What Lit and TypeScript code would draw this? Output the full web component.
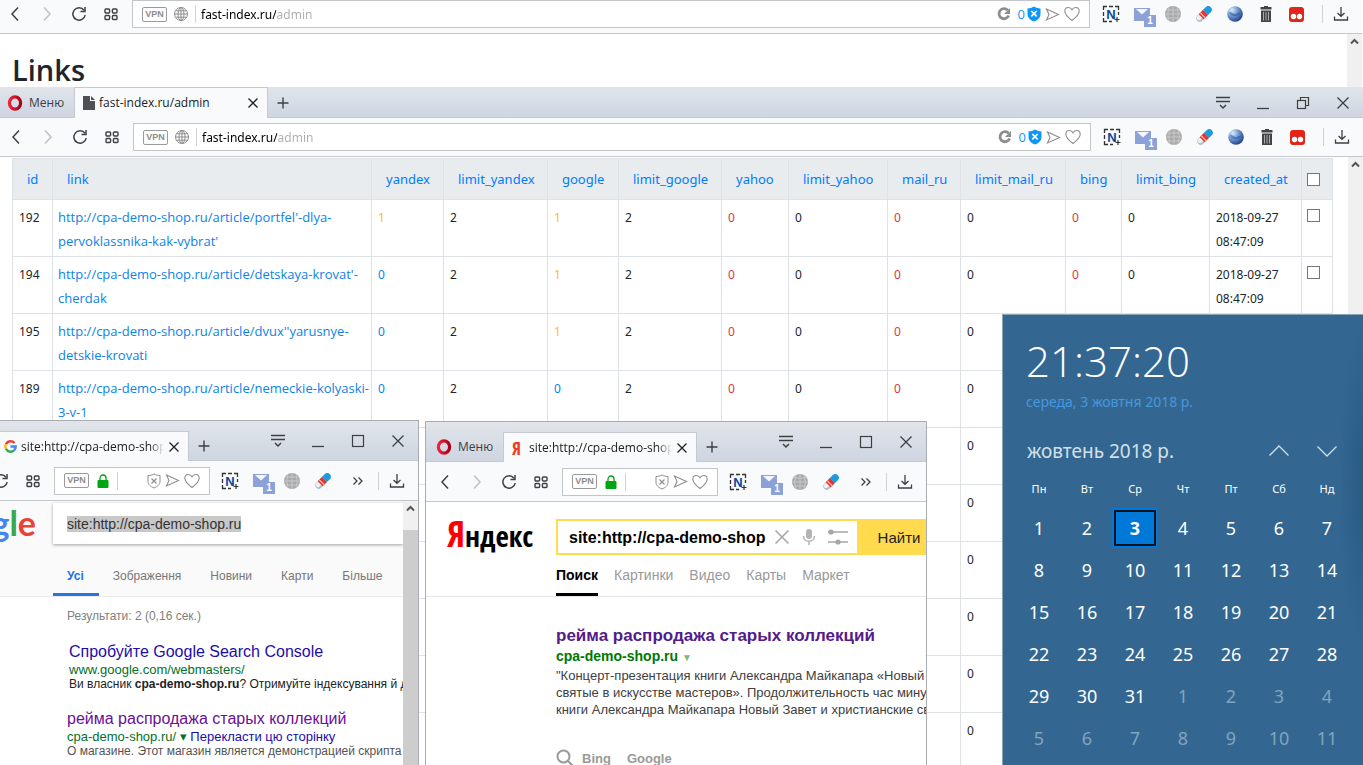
import { LitElement, html, css, svg, nothing } from "lit";
import { customElement, property } from "lit/decorators.js";
import { classMap } from "lit/directives/class-map.js";

/* ---------- icons ---------- */

const line = (size: number, body: unknown, width = 1.5) => html`
  <svg width=${size} height=${size} viewBox="0 0 ${size} ${size}" fill="none" stroke="currentColor"
    stroke-width=${width} aria-hidden="true">${body}</svg>`;

const icons = {
  back: line(16, svg`<path d="M11 1.500 5 8l6 6.500"/>`),
  forward: line(16, svg`<path d="M5 1.500 11 8l-6 6.500"/>`),
  reload: line(16, svg`<path d="M13 4.200A6.200 6.200 0 1 0 14.200 9"/><path d="M14 1v4.500H9.500"/>`),
  tiles: line(16, svg`<rect x="2" y="3" width="4.600" height="4" rx="1"/><rect x="9.400" y="3" width="4.600" height="4" rx="1"/>
    <rect x="2" y="9.500" width="4.600" height="4" rx="1"/><rect x="9.400" y="9.500" width="4.600" height="4" rx="1"/>`, 1.4),
  globe: line(16, svg`<circle cx="8" cy="8" r="6.500"/><ellipse cx="8" cy="8" rx="3" ry="6.500"/>
    <path d="M8 1.500v13M1.500 8h13M2.500 4.800h11M2.500 11.200h11"/>`, 1),
  reloadBold: line(16, svg`<path d="M11.700 4.300A5 5 0 1 0 12.700 9.500" stroke-width="2.800"/><path d="M14 2v6H8z" fill="currentColor" stroke="none"/>`),
  shield: html`<svg width="14" height="16" viewBox="0 0 14 16" aria-hidden="true">
    <path d="M.5 2.500C3 2.500 5 1.800 7 .5c2 1.300 4 2 6.500 2v5.500c0 3.500-2.500 6-6.500 7.500C3 14 .5 11.500.5 8z" fill="#0d97f7"/>
    <path d="M4.300 5l5.400 5.400M9.700 5l-5.400 5.400" stroke="#fff" stroke-width="1.700"/></svg>`,
  shieldLine: html`<svg width="14" height="16" viewBox="0 0 14 16" fill="none" stroke="#8d8d8d" aria-hidden="true">
    <path d="M1 2.500c2.500 0 4-.5 6-1.500 2 1 3.500 1.500 6 1.500v6c0 3-2.500 5-6 6.500-3.500-1.500-6-3.500-6-6.500z"/><path d="M4.500 5.500l5 5M9.500 5.500l-5 5" stroke-width="1.200"/></svg>`,
  send: line(15, svg`<path d="M1.500 2l12 5.500-12 5.500 2.500-5.500z"/>`, 1.1),
  heart: line(16, svg`<path d="M8 14.500C4 11.500.8 8.500.8 5.300.8 3 2.400 1.500 4.400 1.500 6 1.500 7.300 2.300 8 3.800c.7-1.500 2-2.300 3.600-2.300 2 0 3.600 1.500 3.600 3.800 0 3.200-3.200 6.200-7.200 9.200z"/>`, 1.1),
  lock: html`<svg width="12" height="14" viewBox="0 0 12 14" aria-hidden="true"><rect x=".5" y="6" width="11" height="8" rx="1" fill="#00a513"/>
    <path d="M3 7V4a3 3 0 0 1 6 0v3" fill="none" stroke="#00a513" stroke-width="1.300"/></svg>`,
  snap: html`<svg width="18" height="18" viewBox="0 0 18 18" aria-hidden="true">
    <path d="M1.500 5V1.500H5M7 1.500h4M13 1.500h3.500V5M1.500 7v4M1.500 13v3.500H5M7 16.500h3M16.500 7v3" fill="none" stroke="#333" stroke-width="1.300"/>
    <path d="M15 12v5M12.500 14.500h5" stroke="#333" stroke-width="1.200"/>
    <text x="9" y="13.500" text-anchor="middle" font-family="Liberation Sans" font-weight="700" font-size="13" fill="#0b47a1">N</text></svg>`,
  mail: html`<svg width="16" height="13" viewBox="0 0 16 13" aria-hidden="true"><rect width="16" height="13" fill="#8ba1d8"/>
    <path d="M2 1h12L8 6.500z" fill="#f4f6fc"/></svg>`,
  greyGlobe: html`<svg width="16" height="16" viewBox="0 0 16 16" aria-hidden="true"><circle cx="8" cy="8" r="8" fill="#a9a9a9"/>
    <path d="M8 0v16M0 8h16M1.500 4h13M1.500 12h13M4 1.500C2.500 6 2.500 10 4 14.500M12 1.500c1.500 4.500 1.500 8.500 0 13" fill="none" stroke="#c9c9c9"/></svg>`,
  pill: html`<svg width="16" height="16" viewBox="0 0 16 16" aria-hidden="true"><g transform="rotate(-45 8 8)">
    <rect x="-1.500" y="4.500" width="19" height="7" rx="3.500" fill="#b3bfc6"/><rect x="-.500" y="5" width="10" height="4.500" rx="2.200" fill="#eef2f4"/>
    <rect x="4" y="4.500" width="6" height="7" fill="#e8322c"/><rect x="5.500" y="4.500" width="1.300" height="7" fill="#f6b3ae"/>
    <path d="M10 4.500h4a3.500 3.500 0 0 1 0 7h-4z" fill="#1c9be0"/></g></svg>`,
  earth: html`<svg width="16" height="16" viewBox="0 0 16 16" aria-hidden="true">
    <defs><radialGradient id="sea" cx=".3" cy=".25" r=".85"><stop offset="0" stop-color="#dcecf8"/><stop offset=".45" stop-color="#6f96cf"/>
    <stop offset="1" stop-color="#17377f"/></radialGradient></defs><circle cx="8" cy="8" r="7.800" fill="url(#sea)"/>
    <path d="M2 6c3 0 4 2 6 2s3-2 5-1c-1 3-4 3-6 3S3 9 2 6z" fill="#24499c" opacity=".5"/></svg>`,
  trash: html`<svg width="12" height="16" viewBox="0 0 12 16" fill="#444" aria-hidden="true"><path d="M4 0h4v1h3.500v2.500H.5V1H4zM1 4.500h10V16H1z"/>
    <path d="M3.500 6v8.500M6 6v8.500M8.500 6v8.500" stroke="#aaa"/></svg>`,
  red: html`<svg width="15" height="15" viewBox="0 0 15 15" aria-hidden="true"><rect width="15" height="15" rx="3" fill="#e32416"/>
    <circle cx="4.500" cy="9.500" r="2.700" fill="#fff"/><circle cx="10.500" cy="9.500" r="2.700" fill="#fff"/></svg>`,
  download: line(16, svg`<path d="M8 1v9M4.500 7 8 10.300 11.500 7M1.500 10.500v3.500h13v-3.500"/>`, 1.3),
  more: line(12, svg`<path d="M1.500 2.500 5 6 1.500 9.500M6.500 2.500 10 6 6.500 9.500"/>`, 1.3),
  lines: line(16, svg`<path d="M1 2.500h14M1 6.500h14" stroke-width="1.300"/><path d="M5 10l3 3 3-3" stroke-width="1.500"/>`),
  minimise: line(16, svg`<path d="M2 13.500h12"/>`, 1.3),
  maximise: line(16, svg`<rect x="2.500" y="2.500" width="11" height="11"/>`, 1.2),
  restore: line(16, svg`<rect x="2.500" y="5.500" width="8" height="8"/><path d="M5.500 5.500v-3h8v8h-3"/>`, 1.2),
  close: line(16, svg`<path d="M2.500 2.500l11 11M13.500 2.500l-11 11"/>`, 1.3),
  clear: line(16, svg`<path d="M1.500 1.500l13 13M14.500 1.500l-13 13"/>`, 1.7),
  tabClose: line(12, svg`<path d="M1.500 1.500l9 9M10.500 1.500l-9 9"/>`, 1.3),
  plus: line(12, svg`<path d="M6 .5v11M.5 6h11"/>`, 1.4),
  opera: html`<svg width="16" height="16" viewBox="0 0 16 16" aria-hidden="true"><defs><linearGradient id="op" x2="1"><stop stop-color="#f0223c"/>
    <stop offset="1" stop-color="#a70016"/></linearGradient></defs><ellipse cx="8" cy="8" rx="5.600" ry="6.200" fill="none" stroke="url(#op)" stroke-width="3.200"/></svg>`,
  page: html`<svg width="12" height="14" viewBox="0 0 12 14" fill="#4d5156" aria-hidden="true"><path d="M0 0h7v5h5v9H0z"/><path d="M8 0l4 4H8z"/></svg>`,
  google: html`<svg width="13" height="13" viewBox="0 0 14 14" fill="none" stroke-width="2.600" aria-hidden="true">
    <path d="M11.300 3.200A5.600 5.600 0 0 0 2.100 4.500" stroke="#ea4335"/><path d="M2.100 4.500a5.600 5.600 0 0 0 0 5" stroke="#fbbc05"/>
    <path d="M2.100 9.500a5.600 5.600 0 0 0 8.700 1.700" stroke="#34a853"/><path d="M10.800 11.200A5.400 5.400 0 0 0 12.600 7H7" stroke="#4285f4"/></svg>`,
  scrollUp: line(9, svg`<path d="M1 6.500 4.500 3 8 6.500"/>`, 2),
  mic: html`<svg width="14" height="18" viewBox="0 0 14 18" aria-hidden="true"><rect x="4" y="1" width="6" height="10" rx="3" fill="#b3b3b3"/>
    <path d="M1.500 8c0 7 11 7 11 0M7 13v4" fill="none" stroke="#b3b3b3" stroke-width="1.500"/></svg>`,
  tune: html`<svg width="20" height="16" viewBox="0 0 20 16" aria-hidden="true"><path d="M0 3h20M0 13h20" stroke="#a6a6a6" stroke-width="1.600"/>
    <circle cx="3" cy="3" r="2.600" fill="#a6a6a6"/><circle cx="10" cy="13" r="2.600" fill="#a6a6a6"/></svg>`,
  search: line(18, svg`<circle cx="7.500" cy="7.500" r="6"/><path d="M12 12l5 5"/>`, 2),
  up: line(20, svg`<path d="M.5 14.500 10 5l9.500 9.500"/>`, 1.3),
  down: line(20, svg`<path d="M.5 5.500 10 15l9.500-9.500"/>`, 1.3),
};

const reset = css`
  :host, *, *::before, *::after { box-sizing: border-box; }
  button, input { font: inherit; color: inherit; border: 0; padding: 0; margin: 0; background: none; border-radius: 0; min-width: 0; }
  button { display: flex; align-items: center; justify-content: center; }
  h1, h2, p { margin: 0; font: inherit; }
  a { text-decoration: none; color: inherit; }
  svg { display: block; flex: none; }
`;

/* ---------- browser window ---------- */

@customElement("browser-window")
export class BrowserWindow extends LitElement {
  @property() tab = "";
  @property() favicon: "page" | "google" | "yandex" = "page";
  @property() address = "";
  @property({ type: Boolean, reflect: true }) small = false;
  @property({ type: Boolean }) bare = false;
  @property({ type: Boolean }) scroll = false;
  @property({ type: Boolean }) thumb = false;

  static styles = [reset, css`
    :host { display: flex; flex-direction: column; overflow: hidden; background: #fff; color: #3c4043;
      font: 12px/16px "Open Sans", "Noto Sans", sans-serif; }
    :host([small]) { border: 1px solid #a9adb1; border-bottom: 0; }
    .strip { flex: none; display: flex; align-items: flex-end; height: 31px; background: linear-gradient(#e1e5eb, #ced5e1);
      box-shadow: inset 0 -1px #c5cad0; }
    :host([small]) .strip { height: 40px; }
    .menu { flex: none; justify-content: flex-start; width: 74px; height: 31px; padding-left: 7px; gap: 6px; }
    :host([small]) .menu { width: 77px; height: 30px; padding-left: 10px; }
    .tab { flex: none; display: flex; align-items: center; width: 194px; height: 31px; padding: 0 8px; gap: 4px;
      background: #f8fafb; border: 1px solid #c5cad0; border-bottom: 0; color: #202124; }
    :host([small]) .tab { height: 30px; }
    .title { flex: 1; min-width: 0; overflow: hidden; white-space: nowrap; }
    .title.fade { mask-image: linear-gradient(90deg, #000 90%, transparent); }
    .ya { width: 13px; color: #ee3b23; font: 18px/20px "Open Sans Condensed", "Liberation Sans Narrow", "Liberation Sans", sans-serif; }
    .add { width: 30px; height: 31px; }
    .controls { display: flex; margin-left: auto; align-self: flex-start; }
    .controls button { width: 40px; height: 31px; }
    :host([small]) .controls button { height: 40px; }
    .bar { flex: none; display: flex; align-items: center; height: 39px; padding-right: 3px; background: #f8fafb; border-bottom: 1px solid #c5c8ca; }
    :host([small]) .bar { padding-left: 3px; height: 40px; }
    .nav { display: flex; }
    .nav button { width: 32px; height: 28px; }
    .nav .off { color: #bfc3c6; }
    .address { flex: 1; min-width: 0; display: flex; align-items: center; height: 28px; margin-left: 5px; padding: 0 9px;
      background: #fff; border: 1px solid #c3c6c8; color: #8d8d8d; }
    .vpn { flex: none; width: 25px; height: 15px; border: 1px solid #9a9a9a; border-radius: 2px;
      font: 700 9px/13px "Liberation Sans", sans-serif; text-align: center; }
    .kind { flex: none; display: flex; justify-content: center; width: 28px; }
    .rule { flex: none; width: 1px; height: 18px; background: #cfd2d4; }
    .url { flex: 1; width: 20px; margin-left: 5px; height: 24px; color: #000; outline: 0;
      background: linear-gradient(90deg, #000 75px, #adadad 75px); background-clip: text; -webkit-background-clip: text;
      -webkit-text-fill-color: transparent; font-family: "Noto Sans", "Open Sans", sans-serif; }
    .marks { flex: none; display: flex; align-items: center; gap: 4px; }
    .marks .count { color: #0d97f7; margin: 0 -2px 0 2px; font-size: 13px; }
    .ext { flex: none; display: flex; margin-left: 5px; }
    :host([small]) .ext { margin-left: 4px; }
    .ext button { width: 31px; height: 28px; position: relative; }
    .badge { position: absolute; left: 18px; top: 15px; width: 12px; height: 12px; background: #8ba1d8; color: #fff;
      font: 700 10px/12px "Liberation Sans", sans-serif; text-align: center; }
    .more { flex: none; width: 40px; height: 28px; }
    .ext + .rule { margin-left: 10px; }
    .save { flex: none; width: 36px; height: 28px; }
    .view { flex: 1; min-height: 0; display: flex; }
    .content { flex: 1; min-width: 0; overflow: hidden; }
    .scrollbar { flex: none; width: 15px; background: #f0f0f0; color: #555; display: flex; flex-direction: column; align-items: center; padding-top: 3px; }
    .track { width: 100%; flex: 1; background: #cdcdcd; margin-top: 17px; }
  `];

  private strip() {
    return html`<div class="strip">
      <button class="menu">${icons.opera}<span>Меню</span></button>
      <div class="tab">
        ${this.favicon === "yandex" ? html`<span class="ya">Я</span>` : icons[this.favicon]}
        <span class=${classMap({ title: true, fade: this.small })}>${this.tab}</span>
        <button aria-label="Close tab">${icons.tabClose}</button>
      </div>
      <button class="add" aria-label="New tab">${icons.plus}</button>
      <div class="controls">
        <button aria-label="Tab menu">${icons.lines}</button>
        <button aria-label="Minimise">${icons.minimise}</button>
        <button aria-label="Maximise">${this.small ? icons.maximise : icons.restore}</button>
        <button aria-label="Close">${icons.close}</button>
      </div>
    </div>`;
  }

  render() {
    return html`
      ${this.bare ? nothing : this.strip()}
      <div class="bar">
        <div class="nav">
          <button aria-label="Back">${icons.back}</button>
          <button class="off" aria-label="Forward">${icons.forward}</button>
          <button aria-label="Reload">${icons.reload}</button>
          <button aria-label="Speed dial">${icons.tiles}</button>
        </div>
        <div class="address">
          <span class="vpn">VPN</span>
          <span class="kind">${this.small ? icons.lock : icons.globe}</span>
          <span class="rule"></span>
          <input class="url" aria-label="Address" .value=${this.address}>
          <div class="marks">
            ${this.small ? icons.shieldLine : html`${icons.reloadBold}<span class="count">0</span>${icons.shield}`}
            ${icons.send}${icons.heart}
          </div>
        </div>
        <div class="ext">
          <button aria-label="Capture">${icons.snap}</button>
          <button aria-label="Mail">${icons.mail}<span class="badge">1</span></button>
          <button aria-label="Translate">${icons.greyGlobe}</button>
          <button aria-label="Cleaner">${icons.pill}</button>
          ${this.small ? nothing : html`
            <button aria-label="Earth">${icons.earth}</button>
            <button aria-label="Clear">${icons.trash}</button>
            <button aria-label="Recorder">${icons.red}</button>`}
        </div>
        ${this.small ? html`<button class="more" aria-label="More extensions">${icons.more}</button>` : nothing}
        <span class="rule"></span>
        <button class="save" aria-label="Downloads">${icons.download}</button>
      </div>
      <div class="view">
        <div class="content"><slot></slot></div>
        ${this.scroll ? html`<div class="scrollbar">${icons.scrollUp}${this.thumb ? html`<div class="track"></div>` : nothing}</div>` : nothing}
      </div>`;
  }
}

/* ---------- links table ---------- */

type Row = { id?: number; link?: string; yandex?: number; google?: number; date?: string };

const columns = ["id", "link", "yandex", "limit_yandex", "google", "limit_google", "yahoo", "limit_yahoo",
  "mail_ru", "limit_mail_ru", "bing", "limit_bing", "created_at"];
const shop = "http://cpa-demo-shop.ru/article/";
const rows: Row[] = [
  { id: 192, link: "portfel'-dlya-pervoklassnika-kak-vybrat'", yandex: 1, google: 1, date: "2018-09-27 08:47:09" },
  { id: 194, link: "detskaya-krovat'-cherdak", yandex: 0, google: 1, date: "2018-09-27 08:47:09" },
  { id: 195, link: "dvux''yarusnye-detskie-krovati", yandex: 0, google: 1 },
  { id: 189, link: "nemeckie-kolyaski-3-v-1", yandex: 0, google: 0 },
  {}, {}, {}, {}, {}, {},
];

@customElement("links-table")
export class LinksTable extends LitElement {
  static styles = [reset, css`
    :host { display: block; padding: 1px 15px 0 12px; font: 13px/24px "Noto Sans", "Open Sans", sans-serif; color: #212529; }
    table { width: 100%; table-layout: fixed; border-collapse: collapse; }
    th, td { border: 1px solid #dee2e6; text-align: left; vertical-align: top; font-weight: 400; white-space: nowrap; }
    th { height: 41px; padding: 0 14px; vertical-align: middle; background: #e9ecef; color: #007bff; }
    td { height: 57px; padding: 5px 5px 3px; }
    td.link { padding-right: 0; white-space: normal; color: #0c83e6; font-family: "Open Sans", "Noto Sans", sans-serif; }
    td.date, td.num { padding: 6px 5px 2px 6px; font-size: 12px; }
    td.date { white-space: normal; }
    .ok { color: #ffc107; }
    .info { color: #0c83e6; }
    .bad { color: #dc3545; }
    .w-id { width: 40px; } .w-yandex { width: 72px; } .w-limit_yandex { width: 104px; } .w-google { width: 71px; }
    .w-limit_google { width: 103px; } .w-yahoo { width: 67px; } .w-limit_yahoo { width: 99px; } .w-mail_ru { width: 73px; }
    .w-limit_mail_ru { width: 105px; } .w-bing { width: 56px; } .w-limit_bing { width: 88px; } .w-created_at { width: 92px; }
    .w-pick { width: 31px; }
    th.w-pick, td.w-pick { padding-left: 5px; padding-right: 5px; }
    input { display: block; appearance: none; width: 13px; height: 13px; border: 1px solid #767676; background: #fff; margin: 4px 0; }
  `];

  private score(value?: number) {
    return html`<td class="num ${value ? "ok" : "info"}">${value ?? nothing}</td>`;
  }

  render() {
    return html`<table>
      <thead><tr>
        ${columns.map((c) => html`<th class="w-${c}"><a href="#">${c}</a></th>`)}
        <th class="w-pick"><input type="checkbox" aria-label="Select all"></th>
      </tr></thead>
      <tbody>${rows.map((r) => html`<tr>
        <td class="num">${r.id}</td>
        <td class="link">${r.link ? html`<a href="#">${shop + r.link}</a>` : nothing}</td>
        ${this.score(r.yandex)}<td class="num">2</td>
        ${this.score(r.google)}<td class="num">2</td>
        <td class="num bad">0</td><td class="num">0</td>
        <td class="num bad">0</td><td class="num">0</td>
        <td class="num bad">0</td><td class="num">0</td>
        <td class="date">${r.date}</td>
        <td class="w-pick"><input type="checkbox" aria-label="Select row"></td>
      </tr>`)}</tbody>
    </table>`;
  }
}

/* ---------- google results ---------- */

@customElement("google-page")
export class GooglePage extends LitElement {
  static styles = [reset, css`
    :host { display: block; font: 13px/16px "Liberation Sans", Arial, sans-serif; white-space: nowrap; color: #222; }
    .head { display: grid; grid-template-columns: 118px 1fr; column-gap: 17px; height: 96px; background: #fafafa; border-bottom: 1px solid #ebebeb; }
    .logo { text-align: right; font: 700 34px/44px Lato, sans-serif; }
    .b { color: #4285f4; } .r { color: #ea4335; } .y { color: #fbbc05; } .g { color: #34a853; }
    .box { width: 100%; height: 41px; margin-top: 2px; padding: 0 14px; background: #fff; box-shadow: 0 1px 3px rgba(0, 0, 0, .35);
      display: flex; align-items: center; font-size: 14px; }
    .box input { field-sizing: content; outline: 0; color: #333; background: #c8c8c8; }
    .tabs { display: flex; height: 40px; margin-top: 12px; color: #777; font-size: 12px; line-height: 40px; }
    .tabs a { padding: 0 15px 0 14px; }
    .tabs .on { color: #1a73e8; font-weight: 700; border-bottom: 3px solid #2a73dc; }
    .results { padding: 11px 0 0 149px; }
    .stats { color: #808080; font-size: 12px; }
    .item { margin-top: 17px; }
    .item.ad { padding-left: 2px; margin-top: 18px; }
    .item h2 { font-size: 16px; line-height: 20px; color: #1a0dab; }
    .item.seen h2 { color: #6a0f9c; }
    .item .site { color: #00702a; line-height: 15px; }
    .item .site a { color: #1a0dab; }
    .item .text { line-height: 15px; color: #222; font-size: 12px; }
    .item.seen .text { color: #545454; }
  `];
  render() {
    return html`
      <div class="head">
        <div class="logo" aria-label="Google"><span class="b">G</span><span class="r">o</span><span class="y">o</span><span class="b">g</span><span class="g">l</span><span class="r">e</span></div>
        <div>
          <div class="box"><input aria-label="Пошук" value="site:http://cpa-demo-shop.ru"></div>
          <nav class="tabs"><a class="on" href="#">Усі</a><a href="#">Зображення</a><a href="#">Новини</a><a href="#">Карти</a><a href="#">Більше</a></nav>
        </div>
      </div>
      <div class="results">
        <p class="stats">Результати: 2 (0,16 сек.)</p>
        <div class="item ad">
          <h2><a href="#">Спробуйте Google Search Console</a></h2>
          <p class="site">www.google.com/webmasters/</p>
          <p class="text">Ви власник <b>cpa-demo-shop.ru</b>? Отримуйте індексування й дані</p>
        </div>
        <div class="item seen">
          <h2><a href="#">рейма распродажа старых коллекций</a></h2>
          <p class="site">cpa-demo-shop.ru/ ▾ <a href="#">Перекласти цю сторінку</a></p>
          <p class="text">О магазине. Этот магазин является демонстрацией скрипта</p>
        </div>
      </div>`;
  }
}

/* ---------- yandex results ---------- */

@customElement("yandex-page")
export class YandexPage extends LitElement {
  static styles = [reset, css`
    :host { display: block; font: 13px/17px "Liberation Sans", Arial, sans-serif; white-space: nowrap; color: #404040; }
    .head { display: grid; grid-template-columns: 130px 1fr; height: 95px; border-bottom: 1px solid #e5e5e5; }
    .logo { padding: 12px 0 0 21px; font: 29px/40px "Liberation Sans Narrow", "Open Sans Condensed", "Liberation Sans", sans-serif; color: #000; }
    .logo .ya { color: #f00; font-size: 36px; }
    .search { display: flex; height: 36px; margin-top: 17px; background: #ffdb4d; border: 2px solid #ffdb4d; border-right: 0; }
    .field { flex: 1; min-width: 0; display: flex; align-items: center; gap: 12px; padding: 0 9px 0 11px; background: #fff; color: #aaa; }
    .field input { flex: 1; width: 20px; margin-right: -4px; outline: 0; color: #000; font-size: 16px; font-weight: 700; }
    .go { flex: none; width: 69px; padding-left: 15px; font-size: 15px; color: #222; }
    .tabs { display: flex; gap: 16px; height: 41px; color: #999; font-size: 14px; line-height: 40px; }
    .tabs a { height: 41px; }
    .tabs .on { font-weight: 700; color: #000; border-bottom: 3px solid #000; }
    .results { padding: 28px 0 0 130px; }
    h2 { font-size: 17px; font-weight: 700; line-height: 22px; color: #551a8b; }
    .site { font-size: 14px; font-weight: 700; line-height: 18px; color: #007700; }
    .site small { color: #80b780; font-size: 10px; }
    .other { display: flex; align-items: center; gap: 8px; margin-top: 31px; font-weight: 700; color: #999; }
    .other a + a { margin-left: 8px; }
  `];
  render() {
    return html`
      <div class="head">
        <div class="logo"><span class="ya">Я</span>ндекс</div>
        <div>
          <form class="search">
            <div class="field"><input aria-label="Запрос" value="site:http://cpa-demo-shop.ru">${icons.clear}${icons.mic}${icons.tune}</div>
            <button class="go" type="button">Найти</button>
          </form>
          <nav class="tabs"><a class="on" href="#">Поиск</a><a href="#">Картинки</a><a href="#">Видео</a><a href="#">Карты</a><a href="#">Маркет</a></nav>
        </div>
      </div>
      <div class="results">
        <h2><a href="#">рейма распродажа старых коллекций</a></h2>
        <p class="site">cpa-demo-shop.ru <small>▼</small></p>
        <p>"Концерт-презентация книги Александра Майкапара «Новый Завет</p>
        <p>святые в искусстве мастеров». Продолжительность час минут</p>
        <p>книги Александра Майкапара Новый Завет и христианские святые</p>
        <div class="other">${icons.search}<a href="#">Bing</a><a href="#">Google</a></div>
      </div>`;
  }
}

/* ---------- clock and calendar ---------- */

@customElement("clock-panel")
export class ClockPanel extends LitElement {
  static styles = [reset, css`
    :host { display: block; padding: 17px 11px 0 12px; overflow: hidden; color: #fff; border: 1px solid #8aa3b5; border-width: 1px 0 0 1px;
      background: radial-gradient(ellipse 24px 160px at 100% 170px, #285a84, transparent), #336791;
      font: 18px/24px "Noto Sans", "Open Sans", sans-serif; }
    .time { padding-left: 11px; font: 300 42px/58px "Open Sans", "Noto Sans", sans-serif; }
    .date { padding-left: 11px; font-size: 14px; line-height: 24px; color: #4797df; }
    .month { display: flex; align-items: center; width: 336px; padding-left: 12px; margin-top: 25px; font-size: 19px; color: #d3e0ea; }
    .month span { flex: 1; }
    .month button { width: 48px; height: 24px; }
    .grid { display: grid; grid-template-columns: repeat(7, 48px); justify-items: center; align-items: center; }
    .names { margin-top: 14px; font-size: 11px; line-height: 24px; }
    .days { margin-top: 6px; grid-auto-rows: 42px; }
    .days button { width: 42px; height: 36px; }
    .days .next { color: #82a4bf; }
    .days .today { font-weight: 700; background: #0078d7; border: 2px solid #05121f; outline: 2px solid #0078d7; }
  `];
  render() {
    const days = Array.from({ length: 42 }, (_, i) => (i < 31 ? i + 1 : i - 30));
    return html`
      <div class="time">21:37:20</div>
      <div class="date">середа, 3 жовтня 2018 р.</div>
      <div class="month"><span>жовтень 2018 р.</span>
        <button aria-label="Previous month">${icons.up}</button><button aria-label="Next month">${icons.down}</button></div>
      <div class="grid names">${["Пн", "Вт", "Ср", "Чт", "Пт", "Сб", "Нд"].map((d) => html`<span>${d}</span>`)}</div>
      <div class="grid days">${days.map((d, i) => html`<button class=${classMap({ next: i > 30, today: i === 2 })}>${d}</button>`)}</div>`;
  }
}

/* ---------- desktop ---------- */

@customElement("app-root")
export class AppRoot extends LitElement {
  static styles = css`
    :host { display: block; position: relative; height: 100vh; overflow: hidden; background: #fff; }
    .win { position: absolute; }
    .rear { left: -1px; right: 1px; top: -5px; bottom: 0; }
    .main { left: 0; right: 0; top: 87px; bottom: 0; }
    .google { left: -83px; top: 420px; bottom: 0; width: 502px; }
    .yandex { left: 425px; top: 421px; bottom: 0; width: 502px; }
    .clock { right: 0; top: 314px; bottom: 0; width: 361px; }
    h1 { margin: 0; padding: 16px 13px; font: 600 29px/40px "Open Sans", "Noto Sans", sans-serif; color: #212529; }
  `;
  render() {
    return html`
      <browser-window class="win rear" bare scroll address="fast-index.ru/admin"><h1>Links</h1></browser-window>
      <browser-window class="win main" scroll tab="fast-index.ru/admin" address="fast-index.ru/admin"><links-table></links-table></browser-window>
      <browser-window class="win google" small scroll thumb favicon="google" tab="site:http://cpa-demo-shop.ru"><google-page></google-page></browser-window>
      <browser-window class="win yandex" small favicon="yandex" tab="site:http://cpa-demo-shop.ru"><yandex-page></yandex-page></browser-window>
      <clock-panel class="win clock"></clock-panel>`;
  }
}
